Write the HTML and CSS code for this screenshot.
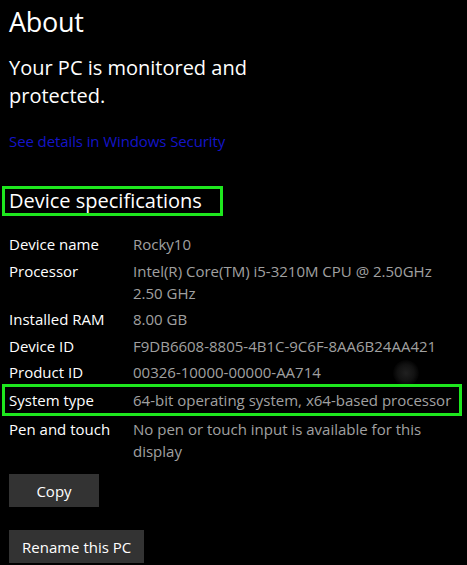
FILE: index.html
```html
<!DOCTYPE html>
<html>
<head>
<meta charset="utf-8">
<link rel="stylesheet" href="styles.css">
</head>
<body>
<div class="page">
  <h1 class="title">About</h1>
  <p class="status">Your PC is monitored and<br>protected.</p>
  <a class="link" href="#">See details in Windows Security</a>
  <h2 class="section"><span class="hl hl-head">Device specifications</span></h2>
  <div class="specs">
    <div class="row"><div class="label">Device name</div><div class="value">Rocky10</div></div>
    <div class="row"><div class="label">Processor</div><div class="value">Intel(R) Core(TM) i5-3210M CPU @ 2.50GHz<br>2.50 GHz</div></div>
    <div class="row"><div class="label">Installed RAM</div><div class="value">8.00 GB</div></div>
    <div class="row"><div class="label">Device ID</div><div class="value">F9DB6608-8805-4B1C-9C6F-8AA6B24AA421</div></div>
    <div class="row"><div class="label">Product ID</div><div class="value">00326-10000-00000-AA714</div><span class="blob"></span></div>
    <div class="row row-hl"><div class="label">System type</div><div class="value">64-bit operating system, x64-based processor</div></div>
    <div class="row"><div class="label">Pen and touch</div><div class="value">No pen or touch input is available for this<br>display</div></div>
  </div>
  <div class="actions">
    <button class="btn btn-copy">Copy</button>
    <button class="btn">Rename this PC</button>
  </div>
</div>
</body>
</html>
```
FILE: styles.css
```css
html, body {
  margin: 0;
  padding: 0;
  background: #000;
}
body {
  font-family: "Open Sans", "Noto Sans", sans-serif;
  color: #fff;
  width: 467px;
  height: 565px;
  overflow: hidden;
}
.page {
  padding: 0 0 0 9px;
}
.title {
  margin: 0;
  font-weight: 400;
  font-size: 27px;
  line-height: 32px;
  padding-top: 6px;
  letter-spacing: -0.3px;
}
.status {
  margin: 16px 0 0 0;
  font-size: 20px;
  line-height: 28px;
}
.link {
  display: block;
  margin-top: 21px;
  color: #1414c8;
  text-decoration: none;
  font-size: 15px;
  line-height: 20px;
  letter-spacing: -0.1px;
}
.section {
  margin: 35px 0 0 -7px;
  font-weight: 400;
  font-size: 20px;
  line-height: 24px;
}
.hl {
  display: inline-block;
  border: 3px solid #1ee81e;
}
.hl-head {
  padding: 0 18px 0 4px;
  height: 24px;
}
.specs {
  margin-top: 15px;
  display: flex;
  flex-direction: column;
}
.row {
  position: relative;
  display: grid;
  grid-template-columns: 124px 1fr;
  font-size: 15px;
  line-height: 22px;
  padding: 2px 0 2.5px 0;
}
.label {
  color: #fff;
}
.value {
  color: #a0a0a0;
}
.row-hl {
  margin: -2px 5px 0 -7px;
  padding: 2px 0 2px 4px;
  border: 3px solid #1ee81e;
}
.blob {
  position: absolute;
  left: 384px;
  top: 1px;
  width: 26px;
  height: 26px;
  border-radius: 50%;
  background: radial-gradient(circle, #202020 0%, #121212 45%, rgba(0,0,0,0) 75%);
}
.actions {
  margin-top: 10px;
  display: flex;
  flex-direction: column;
  align-items: flex-start;
  gap: 23px;
}
.btn {
  font-family: inherit;
  background: #333;
  color: #fff;
  border: none;
  font-size: 15px;
  height: 33px;
  padding: 0 13px;
}
.btn-copy {
  width: 90px;
}
```
